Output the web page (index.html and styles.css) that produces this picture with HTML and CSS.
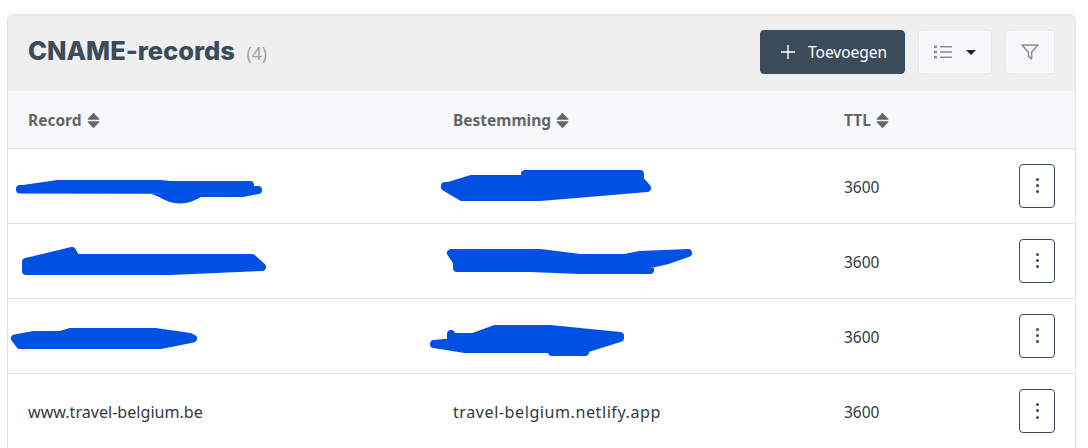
FILE: index.html
```html
<!DOCTYPE html>
<html lang="nl">

<head>
    <meta charset="UTF-8">
    <title>CNAME-records</title>
    <link rel="stylesheet" href="styles.css">
</head>

<body>
    <div class="card">
        <div class="card-header">
            <h2 class="title">CNAME-records <small class="count">(4)</small></h2>
            <div class="actions">
                <button class="btn btn-primary">
                    <svg class="icon-plus" viewBox="0 0 16 16"><path d="M8 1v14M1 8h14" /></svg>
                    Toevoegen
                </button>
                <button class="btn btn-light btn-list">
                    <svg class="icon-list" viewBox="0 0 18 14">
                        <path class="dots" d="M0 0.5h3v2.4H0zM0 5.8h3v2.4H0zM0 11.1h3v2.4H0z" />
                        <path class="lines" d="M6 1.7h12M6 7h12M6 12.3h12" />
                    </svg>
                    <span class="caret"></span>
                </button>
                <button class="btn btn-light btn-filter">
                    <svg class="icon-filter" viewBox="0 0 18 16"><path d="M1 1h16l-6.4 7.2v6.6l-3.2-2.4V8.200z" /></svg>
                </button>
            </div>
        </div>

        <table class="records">
            <colgroup>
                <col class="col-record">
                <col class="col-target">
                <col class="col-ttl">
                <col>
            </colgroup>
            <thead>
                <tr>
                    <th>Record <svg class="sort" viewBox="0 0 12 16"><path d="M6 .6l5.400 5.800c.3.4.1.9-.4.900H1c-.5 0-.7-.5-.4-.9zM6 15.400L.6 9.600c-.3-.4-.1-.9.4-.9h10c.5 0 .7.5.4.900z" /></svg></th>
                    <th>Bestemming <svg class="sort" viewBox="0 0 12 16"><path d="M6 .6l5.400 5.800c.3.4.1.9-.4.900H1c-.5 0-.7-.5-.4-.9zM6 15.400L.6 9.600c-.3-.4-.1-.9.4-.9h10c.5 0 .7.5.4.900z" /></svg></th>
                    <th>TTL <svg class="sort" viewBox="0 0 12 16"><path d="M6 .6l5.400 5.800c.3.4.1.9-.4.900H1c-.5 0-.7-.5-.4-.9zM6 15.400L.6 9.600c-.3-.4-.1-.9.4-.9h10c.5 0 .7.5.4.900z" /></svg></th>
                    <th></th>
                </tr>
            </thead>
            <tbody>
                <tr>
                    <td></td>
                    <td></td>
                    <td>3600</td>
                    <td class="cell-menu"><button class="btn-menu"><span></span><span></span><span></span></button></td>
                </tr>
                <tr>
                    <td></td>
                    <td></td>
                    <td>3600</td>
                    <td class="cell-menu"><button class="btn-menu"><span></span><span></span><span></span></button></td>
                </tr>
                <tr>
                    <td></td>
                    <td></td>
                    <td>3600</td>
                    <td class="cell-menu"><button class="btn-menu"><span></span><span></span><span></span></button></td>
                </tr>
                <tr>
                    <td class="cell-name">www.travel-belgium.be</td>
                    <td class="cell-target">travel-belgium.netlify.app</td>
                    <td>3600</td>
                    <td class="cell-menu"><button class="btn-menu"><span></span><span></span><span></span></button></td>
                </tr>
            </tbody>
        </table>
    </div>

    <!-- blue marker lines over the hidden records -->
    <svg class="scribbles" viewBox="0 0 1088 448">
        <path d="M20 189.500L258 190L242 193H200Q180 206 160 193L150 189H20zM20 189.500L58 184H160L170 185H250" />
        <path d="M26 262L72 251L76 258H252L262 267L170 271H26zM26 271H165M70 262H256" />
        <path d="M15 338.500L34 335H60L70 332H155L190 337L193 338.500L160 345L140 345H20zM20 344H140" />
        <path d="M445 187L471 179H525V174H640V180L647 188L600 192L540 197H462zM445 186H640" />
        <path d="M451 253H540L580 258H625L640 255L688 253L668 260L650 264V270H580L530 268H457V262zM460 260H668" />
        <path d="M434 344L455 342V337H473L495 329H550L620 336V338L585 349V352H552V349H465zM451 334V342" />
    </svg>
</body>

</html>
```

FILE: styles.css
```css
* {
    padding: 0;
    margin: 0;
    box-sizing: border-box;
}

body {
    font-family: "Noto Sans", sans-serif;
    font-size: 15.500px;
    color: #343a40;
    background-color: #ffffff;
    padding: 14px 12px 0 7px;
    height: 448px;
    overflow: hidden;
    position: relative;
}

.card {
    border: 1px solid #dee2e6;
    border-radius: 6px;
    overflow: hidden;
    height: 442px;
}

.card-header {
    display: flex;
    align-items: center;
    justify-content: space-between;
    height: 76px;
    padding: 0 20px;
    background-color: #efefef;
}

.title {
    font-family: "Inter", sans-serif;
    font-size: 25.500px;
    font-weight: 800;
    color: #3a4b59;
    margin-top: -5px;
}

.count {
    font-family: "Noto Sans", sans-serif;
    font-size: 17.500px;
    font-weight: 400;
    color: #9aa3ab;
    margin-left: 6px;
}

.actions {
    display: flex;
    align-items: center;
    margin-top: -2px;
}

.btn {
    display: flex;
    align-items: center;
    height: 44px;
    border-radius: 4px;
    font-family: inherit;
    font-size: 15.500px;
}

.btn-primary {
    width: 145px;
    padding-left: 19px;
    background-color: #3a4b59;
    border: 1px solid #3a4b59;
    color: #ffffff;
    margin-right: 13px;
}

.btn-light {
    background-color: #f7f8fa;
    border: 1px solid #e6e8eb;
}

.btn-list {
    width: 74px;
    padding-left: 15px;
    margin-right: 13px;
}

.btn-filter {
    width: 50px;
    justify-content: center;
}

.icon-plus {
    width: 16px;
    height: 16px;
    margin-right: 12px;
    fill: none;
    stroke: #ffffff;
    stroke-width: 1.400;
}

.icon-list {
    width: 18px;
    height: 14px;
    margin-right: 14px;
}

.icon-list .dots {
    fill: #8d8d8d;
}

.icon-list .lines {
    fill: none;
    stroke: #8d8d8d;
    stroke-width: 1.600;
}

.caret {
    width: 0;
    height: 0;
    border-left: 5px solid transparent;
    border-right: 5px solid transparent;
    border-top: 5px solid #212529;
}

.icon-filter {
    width: 18px;
    height: 16px;
    fill: none;
    stroke: #8d8d8d;
    stroke-width: 1.500;
    stroke-linejoin: round;
}

.records {
    width: 100%;
    border-collapse: collapse;
    table-layout: fixed;
}

.col-record {
    width: 445px;
}

.col-target {
    width: 391px;
}

.col-ttl {
    width: 155px;
}

.records th {
    height: 57px;
    padding-left: 20px;
    padding-top: 2px;
    background-color: #f7f8fa;
    border-bottom: 1px solid #dee2e6;
    color: #666666;
    font-weight: 700;
    text-align: left;
}

.records th + th,
.records td + td {
    padding-left: 0;
}

.records td {
    height: 75px;
    padding-left: 20px;
    padding-top: 2px;
    border-bottom: 1px solid #dee2e6;
}

.records td.cell-name {
    font-size: 16.100px;
}

.records td.cell-target {
    font-size: 16.100px;
    letter-spacing: 0.550px;
}

.records tr:last-child td {
    border-bottom: none;
}

.sort {
    width: 13px;
    height: 17px;
    margin-left: 1px;
    fill: #666666;
    vertical-align: -3px;
}

.records td.cell-menu {
    padding-left: 20px;
    padding-top: 0;
}

.btn-menu {
    display: flex;
    flex-direction: column;
    align-items: center;
    justify-content: center;
    gap: 3.300px;
    width: 36px;
    height: 44px;
    background-color: #ffffff;
    border: 1px solid #3a4b59;
    border-radius: 4px;
}

.btn-menu span {
    width: 3px;
    height: 3px;
    border-radius: 50%;
    background-color: #3a4b59;
}

.scribbles {
    position: absolute;
    left: 0;
    top: 0;
    width: 1088px;
    height: 448px;
    fill: #0050e4;
    stroke: #0050e4;
    stroke-width: 8;
    stroke-linecap: round;
    stroke-linejoin: round;
}
```
